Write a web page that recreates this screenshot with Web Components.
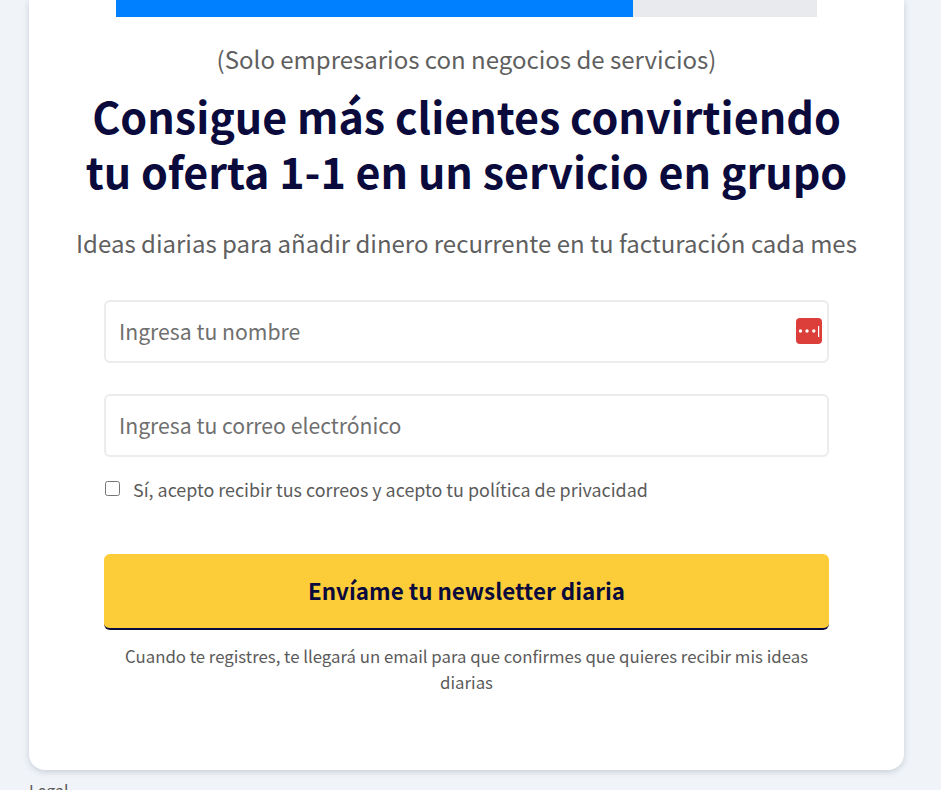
<!DOCTYPE html>
<html lang="es">
<head>
<meta charset="utf-8">
<title>Newsletter</title>
<style>
html, body { margin: 0; padding: 0; height: 790px; overflow: hidden; background: #f0f4f9; }
body { font-family: "Noto Sans CJK JP", "Noto Sans", sans-serif; color: #5b5b5b; }
</style>
</head>
<body>
<signup-page>
	<signup-card>
		<progress-bar value="73.8"></progress-bar>
		<span slot="intro">(Solo empresarios con negocios de servicios)</span>
		<span slot="title">Consigue más clientes convirtiendo<br>tu oferta 1-1 en un servicio en grupo</span>
		<span slot="subtitle">Ideas diarias para añadir dinero recurrente en tu facturación cada mes</span>
		<signup-form slot="form"></signup-form>
	</signup-card>
	<span slot="footer">Legal</span>
</signup-page>

<script>
class SignupPage extends HTMLElement {
	connectedCallback() {
		if (this.shadowRoot) return;
		this.attachShadow({ mode: 'open' }).innerHTML = `
<style>
:host { display: flex; flex-direction: column; padding: 0 37px 0 29px; }
.foot { font-size: 16px; line-height: 20px; margin-top: 10px; color: #5b5b5b; }
</style>
<slot></slot>
<div class="foot"><slot name="footer"></slot></div>`;
	}
}

class SignupCard extends HTMLElement {
	connectedCallback() {
		if (this.shadowRoot) return;
		this.attachShadow({ mode: 'open' }).innerHTML = `
<style>
:host {
	display: flex;
	flex-direction: column;
	align-items: center;
	box-sizing: border-box;
	height: 770px;
	background: #fff;
	border-radius: 0 0 16px 16px;
	box-shadow: 0 2px 6px rgba(60, 70, 90, .22);
	text-align: center;
}
.intro { font-size: 24px; line-height: 34px; margin-top: 25px; color: #5f5f5f; }
h1 { margin: 12px 0 0; font-size: 43px; line-height: 55px; font-weight: 700; color: #0a0a3c; }
.sub { font-size: 24px; line-height: 34px; margin-top: 28px; color: #5f5f5f; }
</style>
<slot></slot>
<div class="intro"><slot name="intro"></slot></div>
<h1><slot name="title"></slot></h1>
<div class="sub"><slot name="subtitle"></slot></div>
<slot name="form"></slot>`;
	}
}

class ProgressBar extends HTMLElement {
	connectedCallback() {
		if (this.shadowRoot) return;
		const value = this.getAttribute('value') || 0;
		this.attachShadow({ mode: 'open' }).innerHTML = `
<style>
:host { display: block; width: 701px; height: 17px; background: #e9eaee; }
div { height: 100%; background: #0080ff; }
</style>
<div style="width:${value}%"></div>`;
	}
}

class SignupForm extends HTMLElement {
	connectedCallback() {
		if (this.shadowRoot) return;
		this.attachShadow({ mode: 'open' }).innerHTML = `
<style>
:host { display: block; width: 725px; margin-top: 40px; text-align: left; }
* { box-sizing: border-box; font-family: inherit; }
.field { position: relative; height: 63px; margin-bottom: 31px; }
input[type=text] {
	display: block;
	width: 100%;
	height: 100%;
	padding: 0 13px 2px;
	border: 2px solid #ececee;
	border-radius: 6px;
	font-size: 21.2px;
	color: #5f5f5f;
	outline: none;
	background: #fff;
}
input::placeholder { color: #6f6f6f; opacity: 1; }
.pw {
	position: absolute;
	right: 7px;
	top: 18px;
	width: 26px;
	height: 26px;
}
label {
	display: flex;
	align-items: center;
	margin-top: -12px;
	font-size: 17.9px;
	line-height: 26px;
	color: #5b5b5b;
}
input[type=checkbox] { width: 15px; height: 15px; margin: 0 13px 1px 1px; }
button {
	display: block;
	width: 100%;
	height: 76px;
	margin-top: 52px;
	padding: 0 0 2px;
	border: 0;
	border-bottom: 2px solid #0a0a3c;
	border-radius: 6px;
	background: #fccd38;
	color: #0a0a3c;
	font-size: 22.4px;
	font-weight: 700;
}
.note { margin: 13px 0 0; font-size: 16.8px; line-height: 26px; text-align: center; color: #5b5b5b; }
</style>
<div class="field">
	<input type="text" placeholder="Ingresa tu nombre">
	<svg class="pw" viewBox="0 0 26 26" aria-hidden="true">
		<rect width="26" height="26" rx="4" fill="#dc3f3a"/>
		<circle cx="4.5" cy="13" r="1.7" fill="#fff"/>
		<circle cx="11" cy="13" r="1.7" fill="#fff"/>
		<circle cx="17.8" cy="13" r="1.7" fill="#fff"/>
		<rect x="22" y="8" width="1.2" height="11" fill="#fff"/>
	</svg>
</div>
<div class="field">
	<input type="text" placeholder="Ingresa tu correo electrónico">
</div>
<label><input type="checkbox">Sí, acepto recibir tus correos y acepto tu política de privacidad</label>
<button type="button">Envíame tu newsletter diaria</button>
<p class="note">Cuando te registres, te llegará un email para que confirmes que quieres recibir mis ideas diarias</p>`;
	}
}

customElements.define('signup-page', SignupPage);
customElements.define('signup-card', SignupCard);
customElements.define('progress-bar', ProgressBar);
customElements.define('signup-form', SignupForm);
</script>
</body>
</html>
